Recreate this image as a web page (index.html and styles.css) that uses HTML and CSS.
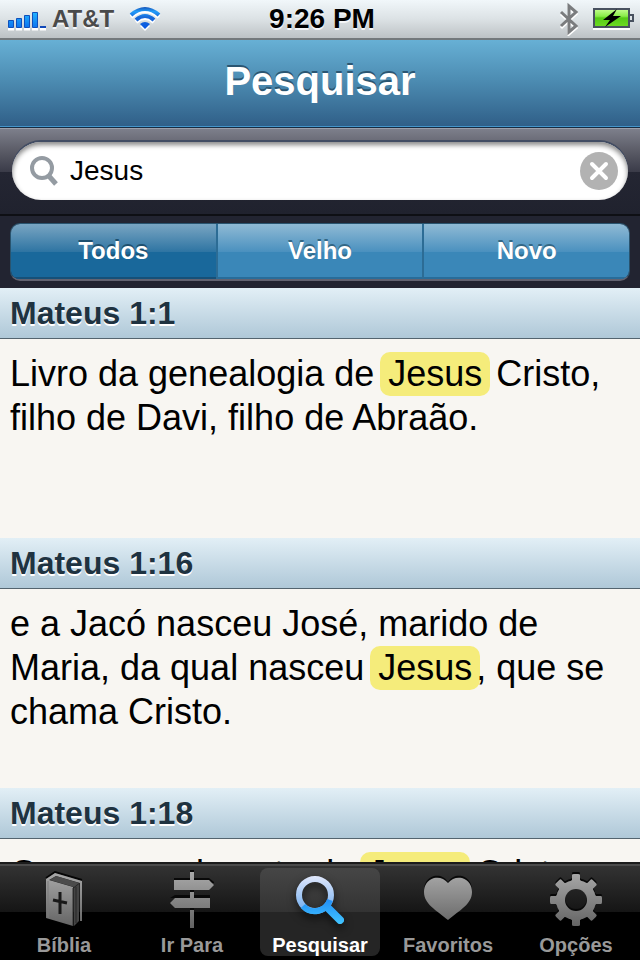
FILE: index.html
```html
<!DOCTYPE html>
<html lang="pt-BR">
<head>
  <meta charset="UTF-8">
  <meta name="viewport" content="width=device-width, initial-scale=1.0">
  <title>Pesquisar</title>
  <link rel="stylesheet" href="styles.css">
</head>
<body>
  <div class="status-bar">
    <div class="status-left">
      <svg class="signal" width="40" height="20" viewBox="0 0 40 20">
        <defs>
          <linearGradient id="signal-fill" x1="0" y1="0" x2="0" y2="1">
            <stop offset="0" stop-color="#22b4ff"/>
            <stop offset="1" stop-color="#0c73ef"/>
          </linearGradient>
        </defs>
        <path d="M0 18h6M8 18h6M16 18h6M24 18h6M32 18h6" stroke="#fff" stroke-width="3"/>
        <g fill="url(#signal-fill)" stroke="#1050bb">
          <path d="M.5 9.500h5v7h-5zM8.500 7.500h5v9h-5zM16.500 4.500h5v12h-5zM24.500 1.500h5v15h-5z"/>
        </g>
        <path d="M32 15h6v2h-6z" fill="#1048b8"/>
      </svg>
      <span class="carrier">AT&amp;T</span>
      <svg class="wifi" width="34" height="26" viewBox="0 0 34 26">
        <defs>
          <linearGradient id="wifi-fill" gradientUnits="userSpaceOnUse" x1="0" y1="1" x2="0" y2="24">
            <stop offset="0" stop-color="#1554b8"/>
            <stop offset=".2" stop-color="#239dfa"/>
            <stop offset=".45" stop-color="#1768d8"/>
            <stop offset="1" stop-color="#0757e5"/>
          </linearGradient>
        </defs>
        <g transform="translate(0 2)" fill="none" stroke="#fff" stroke-width="4">
          <path d="M3 9Q17-3 31 9M8 14Q17 6 26 14"/>
          <path d="M12 18Q17 14 22 18L17 23Z" fill="#fff" stroke="none"/>
        </g>
        <g fill="none" stroke="url(#wifi-fill)" stroke-width="4">
          <path d="M3 9Q17-3 31 9M8 14Q17 6 26 14"/>
          <path d="M12 18Q17 14 22 18L17 23Z" fill="url(#wifi-fill)" stroke="none"/>
        </g>
      </svg>
    </div>
    <span class="clock">9:26 PM</span>
    <div class="status-right">
      <svg width="22" height="34" viewBox="0 0 22 34">
        <path d="M3 11L18 25L11 31V5L18 11L3 25" transform="translate(0 1)" fill="none" stroke="#fff" stroke-width="3"/>
        <path d="M3 10L18 24L11 30V4L18 10L3 24" fill="none" stroke="#7a7c7e" stroke-width="3"/>
      </svg>
      <svg width="44" height="24" viewBox="0 0 44 24">
        <defs>
          <linearGradient id="battery-fill" x1="0" y1="0" x2="0" y2="1">
            <stop offset="0" stop-color="#c6ff92"/>
            <stop offset=".4" stop-color="#89ec49"/>
            <stop offset=".5" stop-color="#55cb16"/>
            <stop offset="1" stop-color="#6edb22"/>
          </linearGradient>
        </defs>
        <path d="M1 22h37" stroke="#fff" stroke-width="2"/>
        <rect x="2" y="2" width="35" height="18" fill="url(#battery-fill)" stroke="#48515f" stroke-width="2"/>
        <path d="M38 8h3v6h-3" fill="none" stroke="#48515f" stroke-width="2"/>
        <path d="M25 2L11 13H18L13 20L29 9H21Z" fill="#000"/>
      </svg>
    </div>
  </div>

  <header class="nav-bar">
    <h1>Pesquisar</h1>
  </header>

  <form class="search-bar" role="search">
    <div class="search-field">
      <label for="busca" aria-label="Pesquisar">
        <svg width="32" height="32" viewBox="0 0 32 32">
          <circle cx="14" cy="13" r="10" fill="none" stroke="#949ba2" stroke-width="4"/>
          <path d="M20 20L28 29" stroke="#949ba2" stroke-width="5"/>
        </svg>
      </label>
      <input type="text" id="busca" value="Jesus">
      <button type="reset" class="clear" aria-label="Limpar">
        <svg width="38" height="38" viewBox="0 0 38 38">
          <circle cx="19" cy="19" r="19" fill="#b2b2b2"/>
          <path d="M12 12L26 26M26 12L12 26" stroke="#fff" stroke-width="4" stroke-linecap="round"/>
        </svg>
      </button>
    </div>
  </form>

  <div class="scope-bar">
    <div class="segments">
      <button type="button" class="segment active" aria-pressed="true">Todos</button>
      <button type="button" class="segment">Velho</button>
      <button type="button" class="segment">Novo</button>
    </div>
  </div>

  <main class="results">
    <section class="result">
      <h2>Mateus 1:1</h2>
      <p>Livro da genealogia de <mark>Jesus</mark> Cristo, filho de Davi, filho de Abraão.</p>
    </section>
    <section class="result">
      <h2>Mateus 1:16</h2>
      <p>e a Jacó nasceu José, marido de Maria, da qual nasceu <mark>Jesus</mark>, que se chama Cristo.</p>
    </section>
    <section class="result">
      <h2>Mateus 1:18</h2>
      <p>Ora, o nascimento de <mark>Jesus</mark> Cristo foi assim:</p>
    </section>
  </main>

  <nav class="tab-bar">
    <a href="#biblia" class="tab">
      <svg width="60" height="60" viewBox="0 0 60 60">
        <defs>
          <linearGradient id="tab-fill" gradientUnits="userSpaceOnUse" x1="0" y1="2" x2="0" y2="58">
            <stop offset="0" stop-color="#a9a9a9"/>
            <stop offset="1" stop-color="#626262"/>
          </linearGradient>
        </defs>
        <path d="M12 8L21 2L48 10" fill="none" stroke="#050505" stroke-width="2"/>
        <path d="M12 9L21 3L48 11V51H46V13L22 6L15 10L39 17V56L12 48Z" fill="url(#tab-fill)"/>
        <path d="M16 10L22 6L45 13L40 17Z" fill="#4b4b4b"/>
        <path d="M40 18L45 14V51L40 56Z" fill="#444"/>
        <path d="M42 17V53" stroke="#272727"/>
        <path d="M14 11V48" stroke="#7c7c7c"/>
        <path d="M39 18V56" stroke="#333"/>
        <path d="M26 22V44M19 30L33 33" fill="none" stroke="#191919" stroke-width="3"/>
      </svg>
      <span>Bíblia</span>
    </a>
    <a href="#ir-para" class="tab">
      <svg width="60" height="60" viewBox="0 0 60 60">
        <path d="M28 0h4v8h15l5 4v1H12V8h16zM28 20h4v5h16v3H8l5-3h15zM28 38h4v4h-4z" fill="#090909"/>
        <path d="M28 2h4v8h15l5 5-5 5H12V10h16zM28 22h4v6h16v10H13L8 33l5-5h15zM28 40h4v18h-4z" fill="url(#tab-fill)"/>
      </svg>
      <span>Ir Para</span>
    </a>
    <a href="#pesquisar" class="tab active" aria-current="page">
      <svg class="glow" width="60" height="60" viewBox="0 0 60 60">
        <defs>
          <linearGradient id="lens" gradientUnits="userSpaceOnUse" x1="0" y1="6" x2="0" y2="44">
            <stop offset="0" stop-color="#e0e7fb"/>
            <stop offset="1" stop-color="#69a9ee"/>
          </linearGradient>
          <linearGradient id="handle" gradientUnits="userSpaceOnUse" x1="0" y1="28" x2="0" y2="54">
            <stop offset="0" stop-color="#208bf5"/>
            <stop offset="1" stop-color="#42c5ff"/>
          </linearGradient>
        </defs>
        <circle cx="25" cy="25" r="16" fill="none" stroke="url(#lens)" stroke-width="6"/>
        <path d="M13 36A16 16 0 0 0 40 30" fill="none" stroke="url(#handle)" stroke-width="6"/>
        <path d="M37 37L50 50" stroke="url(#handle)" stroke-width="8" stroke-linecap="round"/>
      </svg>
      <span>Pesquisar</span>
    </a>
    <a href="#favoritos" class="tab">
      <svg width="60" height="60" viewBox="0 0 60 60">
        <path d="M30 12C34 6 39 5 44 6C51 8 54 14 54 20C54 33 42 40 30 49C18 40 6 33 6 20C6 14 9 8 16 6C21 5 26 6 30 12Z" fill="#080808"/>
        <path d="M30 13C34 8 39 7 44 8C51 10 54 16 54 22C54 34 42 40 30 50C18 40 6 34 6 22C6 16 9 10 16 8C21 7 26 8 30 13Z" fill="url(#tab-fill)"/>
      </svg>
      <span>Favoritos</span>
    </a>
    <a href="#opcoes" class="tab">
      <svg width="60" height="60" viewBox="0 0 60 60">
        <defs>
          <mask id="gear-mask">
            <circle cx="30" cy="30" r="20" fill="#fff"/>
            <g fill="#fff">
              <path id="tooth" d="M23 13L26 10V5Q26 4 28 4H32Q34 4 34 5V10L37 13Z"/>
              <use href="#tooth" transform="rotate(45 30 30)"/>
              <use href="#tooth" transform="rotate(90 30 30)"/>
              <use href="#tooth" transform="rotate(135 30 30)"/>
              <use href="#tooth" transform="rotate(180 30 30)"/>
              <use href="#tooth" transform="rotate(225 30 30)"/>
              <use href="#tooth" transform="rotate(270 30 30)"/>
              <use href="#tooth" transform="rotate(315 30 30)"/>
            </g>
            <circle cx="30" cy="30" r="11" fill="#000"/>
          </mask>
        </defs>
        <g transform="translate(0 -2)"><path d="M0 0h60v60H0z" fill="#080808" mask="url(#gear-mask)"/></g>
        <path d="M0 0h60v60H0z" fill="url(#tab-fill)" mask="url(#gear-mask)"/>
      </svg>
      <span>Opções</span>
    </a>
  </nav>
</body>
</html>
```
FILE: styles.css
```css
* {
  margin: 0;
  padding: 0;
  box-sizing: border-box;
}
body {
  display: flex;
  flex-direction: column;
  height: 100vh;
  overflow: hidden;
  background: #f8f6f2;
  color: #000;
  font-family: "Liberation Sans", Arial, sans-serif;
}
svg {
  display: block;
  flex-shrink: 0;
}
button {
  border: none;
  background: none;
  font-family: inherit;
  cursor: pointer;
}

/* status bar */
.status-bar {
  display: grid;
  grid-template-columns: 1fr auto 1fr;
  align-items: center;
  height: 40px;
  padding: 0 4px 0 8px;
  flex-shrink: 0;
  background: linear-gradient(#f1f7fa, #dce2e5 50%, #bdc2c5);
  border-bottom: 2px solid #74797c;
  font-weight: bold;
  text-shadow: 0 2px 0 #f4f6f8;
}
.status-left,
.status-right {
  display: flex;
  align-items: center;
}
.status-right {
  justify-content: flex-end;
  gap: 12px;
}
.signal {
  margin-top: 4px;
}
.carrier {
  margin: 0 14px 0 4px;
  font-size: 24px;
  color: #4a4a4a;
}
.clock {
  font-size: 28px;
}

/* title */
.nav-bar {
  display: flex;
  align-items: center;
  justify-content: center;
  height: 88px;
  padding-bottom: 4px;
  flex-shrink: 0;
  background: linear-gradient(#67b0d5, #4d8db3 45%, #2f5e87);
  border-bottom: 1px solid #172c43;
  box-shadow: inset 0 -1px 0 #4495cb;
}
h1 {
  font-size: 40px;
  color: #fff;
  text-shadow: 0 -2px 0 #2b5672;
}

/* search */
.search-bar {
  padding: 13px 12px 14px;
  flex-shrink: 0;
  background: linear-gradient(#7d7f8b, #5d5e69 24%, #3b3c49 50%, #242633 50%, #20222e);
  border-top: 1px solid #9da0ab;
  border-bottom: 2px solid #0e0f14;
}
.search-field {
  display: flex;
  align-items: center;
  height: 58px;
  padding: 0 10px 0 16px;
  border-radius: 29px;
  background: #fff;
  box-shadow: 0 -2px 0 #414c63, inset 0 3px 5px #888;
}
.search-field input {
  flex: 1;
  min-width: 0;
  margin-left: 10px;
  border: none;
  outline: none;
  background: none;
  font-family: inherit;
  font-size: 28px;
  color: #000;
}
.scope-bar {
  padding: 7px 10px;
  flex-shrink: 0;
  background: #222431;
}
.segments {
  display: flex;
  height: 58px;
  border: 1px solid #29546f;
  border-bottom: 2px solid #626371;
  border-radius: 10px;
  overflow: hidden;
}
.segment {
  flex: 1;
  padding-bottom: 2px;
  background: linear-gradient(#90bad5, #4b91bf 50%, #3a87b8 50%);
  box-shadow: inset 0 -2px 0 #286c99;
  font-size: 24px;
  font-weight: bold;
  color: #fff;
  text-shadow: 0 -2px 0 #336785;
}
.segment + .segment {
  border-left: 2px solid #2c6c95;
}
.segment.active {
  background: linear-gradient(#79a5c2, #2f75a3 50%, #19689b 50%);
  box-shadow: inset 0 -2px 0 #165078;
  text-shadow: 0 -2px 0 #1e506f;
}

/* results */
.results {
  flex: 1;
  min-height: 0;
  overflow: hidden;
}
.result {
  min-height: 250px;
}
h2 {
  padding: 0 10px;
  font-size: 32px;
  line-height: 50px;
  color: #1f3341;
  text-shadow: 0 2px 0 #fff;
  background: linear-gradient(#e2eff6, #afc8d8);
  border-bottom: 1px solid #53646f;
}
.result p {
  padding: 13px 24px 0 10px;
  font-size: 36px;
  line-height: 44px;
}
mark {
  display: inline-block;
  margin: 0 -4px;
  padding: 0 8px;
  border-radius: 10px;
  background: #f5ec7b;
  color: #000;
}

/* tabs */
.tab-bar {
  display: flex;
  height: 98px;
  flex-shrink: 0;
  background: linear-gradient(#343434, #151515 50%, #000 50%);
  border-top: 2px solid #1c1c1c;
  box-shadow: inset 0 2px 0 #4b4b4b;
}
.tab {
  flex: 1;
  display: flex;
  flex-direction: column;
  align-items: center;
  margin: 4px;
  padding-top: 2px;
  border-radius: 8px;
  font-size: 20px;
  font-weight: bold;
  line-height: 30px;
  color: #999;
  text-decoration: none;
}
.tab.active {
  background: linear-gradient(#464646, #333 50%, #252525 50%);
  color: #fff;
}
.glow {
  filter: drop-shadow(0 4px 4px #0009);
}
```
